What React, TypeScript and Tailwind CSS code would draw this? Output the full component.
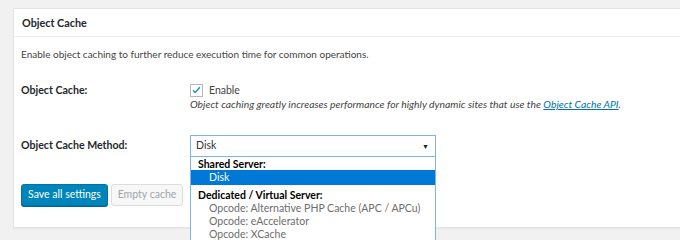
export default function App() {
  return (
    <div className="h-[240px] w-[680px] overflow-hidden bg-[#f1f1f1] pl-[13px] pt-[8px] font-['Lato',sans-serif] text-[10px] text-[#444]">
      <div className="w-[700px] border border-[#e5e5e5] bg-white shadow-[0_1px_1px_rgba(0,0,0,0.04)]">
        <div className="flex h-[28px] items-center border-b border-[#eee] pl-[8px] pt-[2px]">
          <h2 className="text-[10.8px] font-bold text-[#23282d]">Object Cache</h2>
        </div>
        <div className="pl-[7px] pt-[10px] pb-[21px]">
          <p className="leading-[14px]">Enable object caching to further reduce execution time for common operations.</p>

          <div className="mt-[22px] flex">
            <div className="w-[169px] text-[10.6px] font-bold leading-[14px] text-[#23282d]">Object Cache:</div>
            <div>
              <label className="flex items-center gap-[6px] text-[10.5px] leading-[14px]">
                <span className="flex h-[13px] w-[13px] items-center justify-center border border-[#b4b9be] bg-white">
                  <svg viewBox="0 0 16 16" className="h-[12px] w-[12px]">
                    <path d="M3 8.5l3 3 7-7.5" fill="none" stroke="#1e8cbe" strokeWidth="2" />
                  </svg>
                </span>
                Enable
              </label>
              <p className="text-[10.35px] italic leading-[14px]">
                Object caching greatly increases performance for highly dynamic sites that use the{' '}
                <a className="text-[#0073aa] underline">Object Cache API</a>.
              </p>
            </div>
          </div>

          <div className="mt-[24px] flex items-center">
            <div className="w-[169px] text-[10.6px] font-bold text-[#23282d]">Object Cache Method:</div>
            <div className="relative text-[10.5px]">
              <div className="flex h-[22px] w-[246px] items-center justify-between border border-[#7eb4ea] bg-white pl-[5px] pr-[6px] text-[#333]">
                <span>Disk</span>
                <span className="text-[7px] text-[#222]">▼</span>
              </div>
              <div className="absolute left-0 top-full z-10 w-[246px] border border-t-0 border-[#7eb4ea] bg-white pb-[20px] leading-[13px] text-[#333]">
                <div className="h-[13px] pl-[7px] pt-[1px] font-bold text-black">Shared Server:</div>
                <div className="h-[15px] bg-[#0078d7] pl-[18px] leading-[15px] text-white">Disk</div>
                <div className="pl-[7px] pt-[4px] font-bold text-black">Dedicated / Virtual Server:</div>
                <div className="pl-[18px] text-[#6d6d6d]">Opcode: Alternative PHP Cache (APC / APCu)</div>
                <div className="pl-[18px] text-[#6d6d6d]">Opcode: eAccelerator</div>
                <div className="pl-[18px] text-[#6d6d6d]">Opcode: XCache</div>
              </div>
            </div>
          </div>

          <div className="mt-[27px] flex gap-[3px] text-[10.5px]">
            <button className="h-[22px] w-[87px] rounded-[3px] border border-[#0073aa] bg-[#0085ba] text-white shadow-[0_1px_0_#006799]">
              Save all settings
            </button>
            <button className="h-[22px] w-[72px] rounded-[3px] border border-[#ddd] bg-[#f7f7f7] text-[#a0a5aa]">
              Empty cache
            </button>
          </div>
        </div>
      </div>
    </div>
  );
}
